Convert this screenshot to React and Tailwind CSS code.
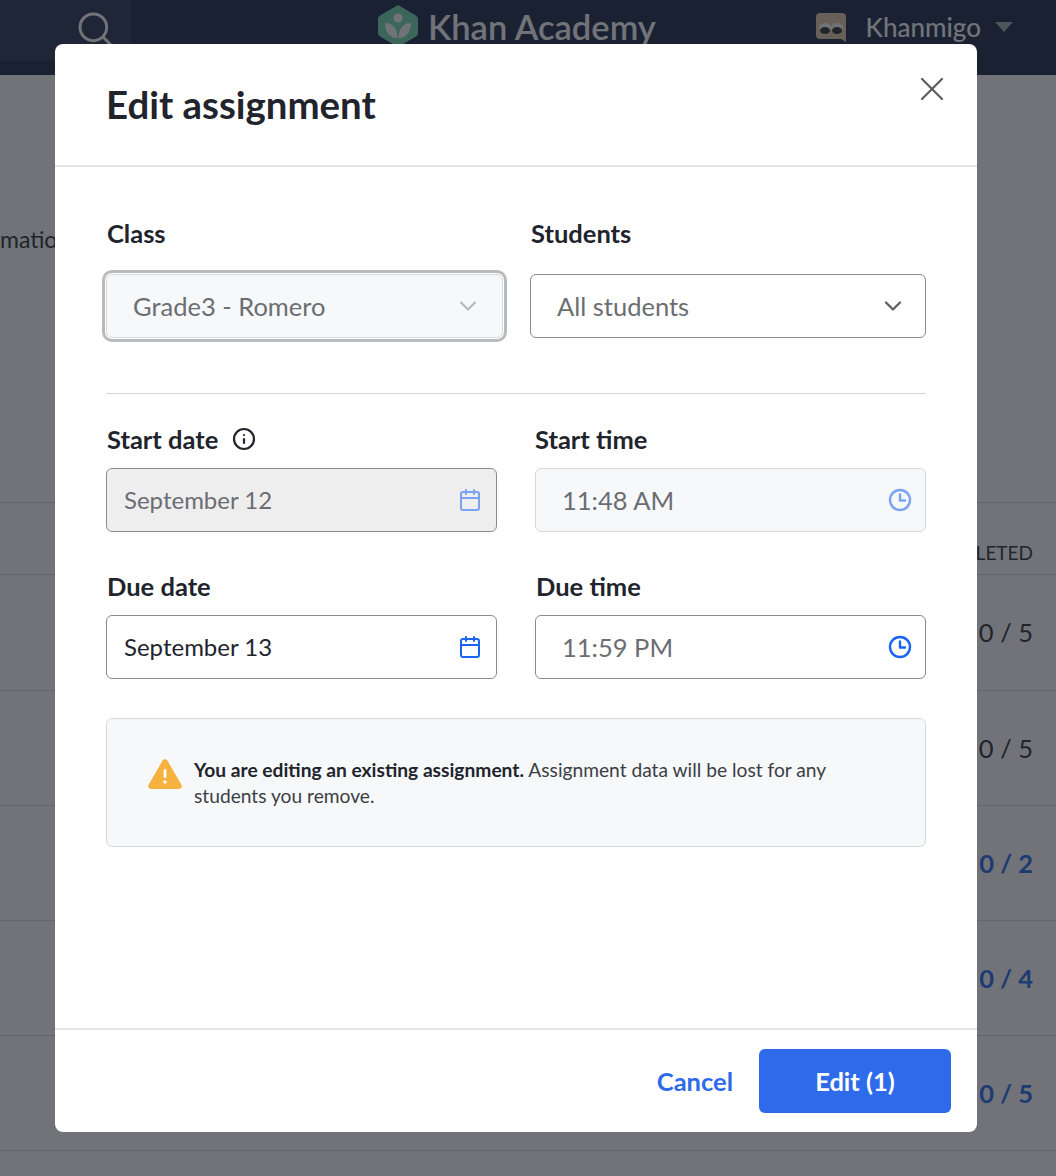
import { X, ChevronDown, Search, Calendar, Info } from "lucide-react";

const rows = [
  { id: 1, value: "0 / 5", h: "h-[116px]", tone: "text-[#21242c]" },
  { id: 2, value: "0 / 5", h: "h-[115px]", tone: "text-[#21242c]" },
  { id: 3, value: "0 / 2", h: "h-[115px]", tone: "text-[#1865f2] font-bold" },
  { id: 4, value: "0 / 4", h: "h-[115px]", tone: "text-[#1865f2] font-bold" },
  { id: 5, value: "0 / 5", h: "h-[115px]", tone: "text-[#1865f2] font-bold" },
];

function ClockIcon({ className }) {
  return (
    <svg viewBox="0 0 24 24" fill="none" stroke="currentColor" strokeWidth="2.4" strokeLinecap="round" strokeLinejoin="round" className={className}>
      <circle cx="12" cy="12" r="10" />
      <path d="M12 6.5V12.5H17" />
    </svg>
  );
}

function WarningIcon() {
  return (
    <svg viewBox="0 0 34 30" className="w-[34px] h-[30px] shrink-0">
      <path d="M14.6 1.6a2.8 2.8 0 0 1 4.8 0l14 24.2a2.8 2.8 0 0 1-2.4 4.2H3a2.8 2.8 0 0 1-2.4-4.2z" fill="#f5b23f" />
      <rect x="15.6" y="10" width="2.8" height="9" rx="1.4" fill="#fff" />
      <circle cx="17" cy="23" r="1.7" fill="#fff" />
    </svg>
  );
}

function KhanLogo() {
  return (
    <svg viewBox="0 0 40 42" className="w-10 h-[42px]">
      <path d="M20 0 38 10.5a4 4 0 0 1 2 3.4v14.2a4 4 0 0 1-2 3.4L20 42 2 31.5a4 4 0 0 1-2-3.4V13.900a4 4 0 0 1 2-3.400z" fill="#70dcb0" />
      <circle cx="20" cy="13" r="4.500" fill="#fff" />
      <path d="M7 18c7 0 12 4 12.500 15C12 33 7 27 7 18z" fill="#fff" />
      <path d="M33 18c-7 0-12 4-12.500 15C28 33 33 27 33 18z" fill="#fff" />
    </svg>
  );
}

function KhanmigoAvatar() {
  return (
    <svg viewBox="0 0 30 29" className="w-[30px] h-[29px]">
      <path d="M4 0h22a4 4 0 0 1 4 4v25l-5-3H4a4 4 0 0 1-4-4V4a4 4 0 0 1 4-4z" fill="#e8c8a8" />
      <ellipse cx="9" cy="15" rx="6" ry="5" fill="#fff" />
      <ellipse cx="21" cy="15" rx="6" ry="5" fill="#fff" />
      <ellipse cx="9" cy="17.500" rx="5" ry="3.500" fill="#21242c" />
      <ellipse cx="21" cy="17.500" rx="5" ry="3.500" fill="#21242c" />
    </svg>
  );
}

function FieldLabel({ children }) {
  return <div className="h-7 pb-[2px] flex items-center text-[25.500px] leading-7 font-bold text-[#21242c]">{children}</div>;
}

function PageBehind() {
  return (
    <div className="h-[1176px] bg-white overflow-hidden">
      <header className="h-[75px] bg-[#0c1c40] relative flex">
        <div className="w-[131px] h-[61px] bg-[#1e2b4c] flex items-center justify-end pr-[16px] pb-1 shrink-0">
          <Search size={40} strokeWidth={1.8} className="text-white" />
        </div>
        <div className="flex-1 flex items-start pt-[5px] pl-[247px]">
          <KhanLogo />
          <span className="ml-[10px] text-[34.500px] leading-[44px] font-semibold text-white">Khan Academy</span>
        </div>
        <div className="flex items-start pt-[13px] pr-[43px]">
          <KhanmigoAvatar />
          <span className="ml-5 text-[26px] leading-7 font-medium text-white">Khanmigo</span>
          <span className="ml-[14px] mt-[9px] w-0 h-0 border-x-[9px] border-x-transparent border-t-[10px] border-t-[#a4a8b4]" />
        </div>
      </header>
      <div className="h-[427px] pt-[150px] text-[23px] leading-7 text-[#21242c]">mation</div>
      <div className="h-[73px] border-y border-[#d6d8da] flex items-end justify-end pb-[7px] pr-[23px] text-[19px] text-[#21242c]">COMPLETED</div>
      {rows.map((row) => (
        <div key={row.id} className={`${row.h} border-b border-[#d6d8da] flex items-center justify-end pr-[23px] text-[25.500px] ${row.tone}`}>
          {row.value}
        </div>
      ))}
    </div>
  );
}

export default function App() {
  return (
    <div className="relative w-[1056px] h-[1176px] overflow-hidden font-[Lato,sans-serif]">
      <PageBehind />
      <div className="absolute inset-0 bg-[#21242c]/[0.64] flex items-start">
        <div className="mt-[44px] ml-[55px] w-[922px] h-[1088px] bg-white rounded-lg flex flex-col overflow-hidden">
          {/* Encabezado */}
          <div className="h-[123px] shrink-0 border-b-2 border-[#e4e5e6] flex items-start justify-between pl-[51px] pr-[25px]">
            <h2 className="mt-[37px] text-[38.400px] leading-[46px] font-bold text-[#21242c]">Edit assignment</h2>
            <X size={40} strokeWidth={1.4} className="mt-[25px] text-[#5f6167]" />
          </div>

          {/* Formulario */}
          <div className="flex-1 px-[51px] pt-[53px]">
            <div className="flex gap-[27px]">
              <div className="w-[397px]">
                <div className="pl-px"><FieldLabel>Class</FieldLabel></div>
                <div className="mt-[26px] h-16 rounded-md border border-[#d8d8da] bg-[#f7f8fa] outline-[3px] outline-solid outline-offset-1 outline-[#b9babd] flex items-center justify-between pl-[26px] pr-[20px]">
                  <span className="text-[25.500px] text-[#6b6d72]">Grade3 - Romero</span>
                  <ChevronDown size={28} strokeWidth={1.800} className="text-[#b5b6b9]" />
                </div>
              </div>
              <div className="flex-1">
                <div className="pl-px"><FieldLabel>Students</FieldLabel></div>
                <div className="mt-[26px] h-16 rounded-md border border-[#8a8b8f] flex items-center justify-between pl-[26px] pr-[18px]">
                  <span className="text-[25.500px] text-[#6b6d72]">All students</span>
                  <ChevronDown size={28} strokeWidth={2} className="text-[#5f6167]" />
                </div>
              </div>
            </div>

            <div className="mt-[55px] h-px bg-[#d4d5d6]" />

            <div className="mt-[32px] grid grid-cols-2 gap-x-[38px] gap-y-[41px]">
              <div>
                <div className="pl-px flex items-center gap-[14px]">
                  <FieldLabel>Start date</FieldLabel>
                  <Info size={24} strokeWidth={2.2} className="text-[#21242c] mb-[2px]" />
                </div>
                <div className="mt-[14px] h-16 rounded-md border border-[#8a8b8f] bg-[#eeeeee] flex items-center justify-between pl-[17px] pr-[14px]">
                  <span className="text-[24px] text-[#6b6d72]">September 12</span>
                  <Calendar size={24} strokeWidth={2} className="text-[#7ba3f3]" />
                </div>
              </div>
              <div>
                <FieldLabel>Start time</FieldLabel>
                <div className="mt-[14px] h-16 rounded-md border border-[#d8d8da] bg-[#f7f8fa] flex items-center justify-between pl-[26px] pr-[13px]">
                  <span className="text-[25.500px] text-[#6b6d72]">11:48 AM</span>
                  <ClockIcon className="w-6 h-6 text-[#7ba3f3]" />
                </div>
              </div>
              <div>
                <div className="pl-px"><FieldLabel>Due date</FieldLabel></div>
                <div className="mt-[14px] h-16 rounded-md border border-[#8a8b8f] bg-white flex items-center justify-between pl-[17px] pr-[14px]">
                  <span className="text-[24px] text-[#21242c]">September 13</span>
                  <Calendar size={24} strokeWidth={2} className="text-[#1865f2]" />
                </div>
              </div>
              <div>
                <div className="pl-px"><FieldLabel>Due time</FieldLabel></div>
                <div className="mt-[14px] h-16 rounded-md border border-[#8a8b8f] bg-white flex items-center justify-between pl-[26px] pr-[13px]">
                  <span className="text-[25.500px] text-[#6b6d72]">11:59 PM</span>
                  <ClockIcon className="w-6 h-6 text-[#1865f2]" />
                </div>
              </div>
            </div>

            {/* Aviso */}
            <div className="mt-[39px] h-[129px] rounded-md border border-[#d8d8da] bg-[#f7f8fa] flex pl-[41px] pr-[60px] pt-[38px]">
              <div className="pt-[2px]"><WarningIcon /></div>
              <p className="ml-3 text-[19.200px] leading-[26px] text-[#3b3e45]">
                <span className="font-bold text-[#21242c]">You are editing an existing assignment.</span> Assignment data will be lost for any students you remove.
              </p>
            </div>
          </div>

          {/* Pie */}
          <div className="h-[104px] shrink-0 border-t-2 border-[#e4e5e6] flex items-center justify-end pr-[26px]">
            <button className="text-[25.500px] font-bold text-[#2d6bea]">Cancel</button>
            <button className="ml-[26px] w-[192px] h-16 rounded-md bg-[#2d6bea] text-white text-[25.500px] font-bold">Edit (1)</button>
          </div>
        </div>
      </div>
    </div>
  );
}
